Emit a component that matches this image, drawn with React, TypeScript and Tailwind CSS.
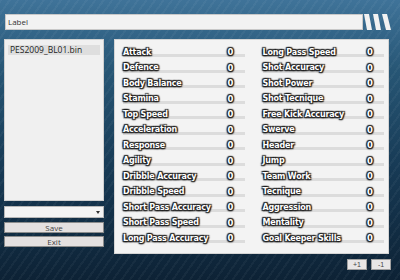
const left = [
  'Attack',
  'Defence',
  'Body Balance',
  'Stamina',
  'Top Speed',
  'Acceleration',
  'Response',
  'Agility',
  'Dribble Accuracy',
  'Dribble Speed',
  'Short Pass Accuracy',
  'Short Pass Speed',
  'Long Pass Accuracy',
];

const right = [
  'Long Pass Speed',
  'Shot Accuracy',
  'Shot Power',
  'Shot Tecnique',
  'Free Kick Accuracy',
  'Swerve',
  'Header',
  'Jump',
  'Team Work',
  'Tecnique',
  'Aggression',
  'Mentality',
  'Goal Keeper Skills',
];

const outline =
  '[text-shadow:0_0_2px_#111,1px_1px_1px_#222,-1px_-1px_1px_#222,1px_-1px_1px_#222,-1px_1px_1px_#222,0_1px_2px_#333]';

function StatRow({ name }: { name: string }) {
  return (
    <div className="relative h-[15.5px] flex items-center">
      <div className="absolute left-0 right-0 top-[9px] h-[3px] bg-[#dcdcdc]" />
      <span
        className={`relative flex-1 text-[8px] font-bold text-white font-['DejaVu_Sans',sans-serif] tracking-[-0.2px] ${outline}`}
      >
        {name}
      </span>
      <span
        className={`relative w-[17px] text-[8.5px] font-bold text-white font-['DejaVu_Sans',sans-serif] ${outline}`}
      >
        0
      </span>
    </div>
  );
}

export default function App() {
  return (
    <div className="w-[400px] h-[280px] overflow-hidden relative bg-[linear-gradient(180deg,#3f7399_0%,#275675_25%,#173a55_60%,#0d2235_100%)] font-['Liberation_Sans',sans-serif]">
      <div className="absolute inset-0 bg-[repeating-linear-gradient(125deg,rgba(255,255,255,0.04)_0px,rgba(255,255,255,0.04)_2px,transparent_2px,transparent_7px)]" />

      <div className="relative flex flex-col pt-[14px] px-[5px]">
        {/* label bar */}
        <div className="flex items-stretch h-[16px]">
          <div className="w-[358px] bg-[#f2f2f2] border border-[#c8c8c8] flex items-center px-[2px] text-[8px] text-[#333] font-['Open_Sans',sans-serif]">
            Label
          </div>
          <svg width="30" height="16" viewBox="0 0 30 16">
            <polygon points="1,0 6,0 9,16 4,16" fill="#f2f2f2" />
            <polygon points="10,0 15,0 18,16 13,16" fill="#f2f2f2" />
            <polygon points="19,0 24,0 28,16 23,16" fill="#f2f2f2" />
          </svg>
        </div>

        <div className="flex mt-[9px]">
          {/* left side */}
          <div className="w-[100px] ml-[-1px] flex flex-col">
            <div className="h-[162px] bg-[#f0f0f0] border border-[#d0d0d0] pt-[5px] px-[3px]">
              <div className="bg-[#dedede] text-[8.5px] leading-[10px] text-[#222] px-[2px] font-['Open_Sans',sans-serif]">
                PES2009_BL01.bin
              </div>
            </div>
            <div className="mt-[5px] h-[12px] bg-[#f4f4f4] border border-[#b8b8b8] flex items-center justify-end pr-[3px]">
              <span className="w-0 h-0 border-l-[2px] border-r-[2px] border-t-[3px] border-l-transparent border-r-transparent border-t-[#333]" />
            </div>
            <button className="mt-[4px] h-[11px] bg-[#e4e0e0] border border-[#8c8c8c] text-[8px] leading-[9px] text-[#444] font-['Open_Sans',sans-serif]">
              Save
            </button>
            <button className="mt-[3px] h-[11px] bg-[#e4e0e0] border border-[#8c8c8c] text-[8px] leading-[9px] text-[#444] font-['Open_Sans',sans-serif]">
              Exit
            </button>
          </div>

          {/* stats panel */}
          <div className="ml-[10px] flex flex-col">
            <div className="w-[275px] h-[215px] bg-[#f3f3f3] border border-[#d4d4d4] pt-[5px] pl-[8px] pr-[4px] grid grid-cols-2 gap-x-[18px]">
              <div className="flex flex-col">
                {left.map((n) => (
                  <StatRow key={n} name={n} />
                ))}
              </div>
              <div className="flex flex-col">
                {right.map((n) => (
                  <StatRow key={n} name={n} />
                ))}
              </div>
            </div>
            <div className="flex justify-end gap-[4px] mt-[5px] mr-[-2px]">
              <button className="w-[20px] h-[11px] bg-[#e8e6e6] border border-[#a0a0a0] text-[7px] leading-[9px] text-[#444]">
                +1
              </button>
              <button className="w-[20px] h-[11px] bg-[#e8e6e6] border border-[#a0a0a0] text-[7px] leading-[9px] text-[#444]">
                -1
              </button>
            </div>
          </div>
        </div>
      </div>
    </div>
  );
}
